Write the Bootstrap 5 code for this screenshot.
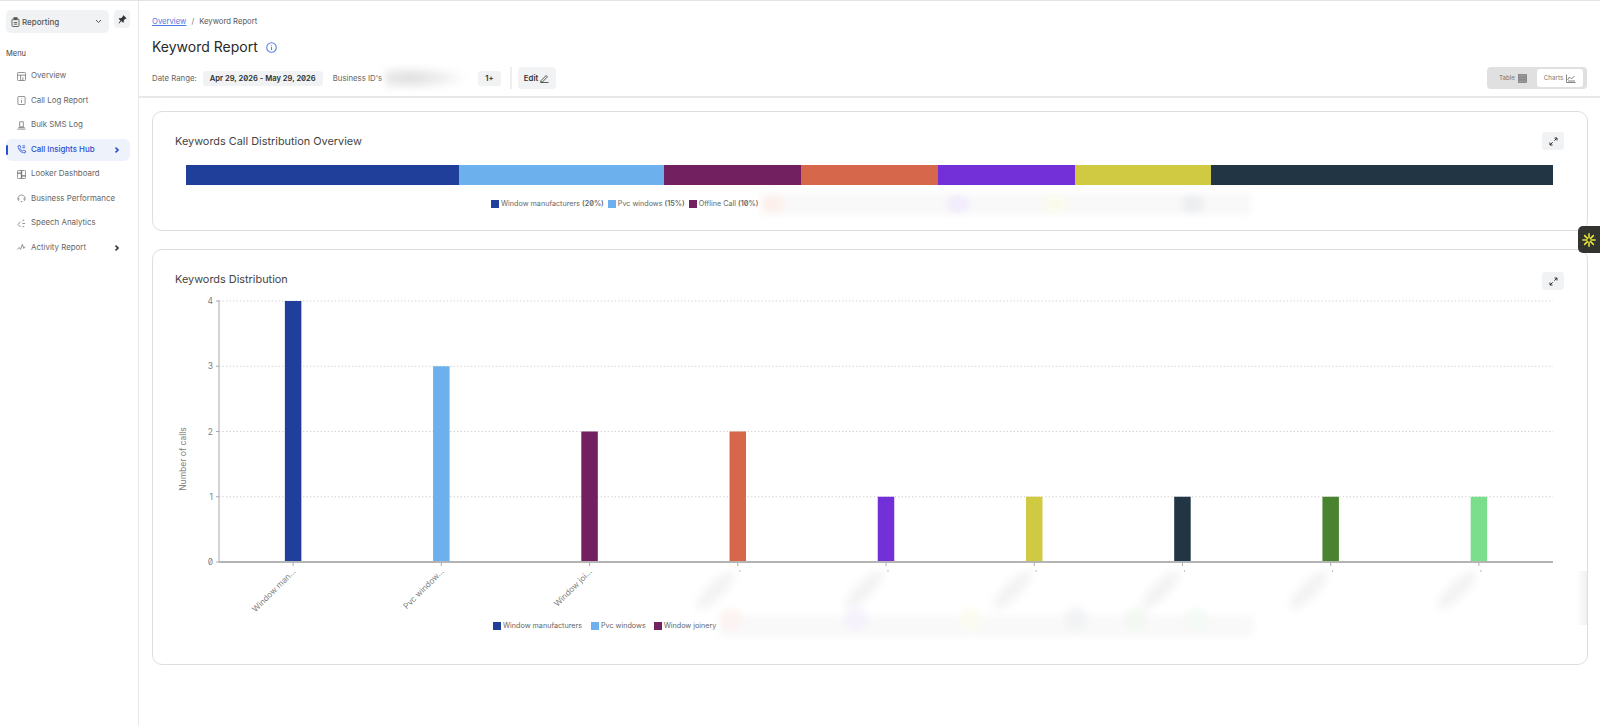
<!DOCTYPE html>
<html lang="en">
<head>
  <meta charset="UTF-8">
  <title>Keyword Report</title>
  <link href="https://cdn.jsdelivr.net/npm/bootstrap@5.3.0/dist/css/bootstrap.min.css" rel="stylesheet">
  <style>
    html, body { height: 725px; overflow: hidden; }
    body { font-family: Inter, "Liberation Sans", sans-serif; font-size: 8px; color: #555; background: #fff; font-feature-settings: "zero"; border-top: 1px solid #e4e4e4; }
    .sidebar { width: 139px; flex: none; height: 724px; border-right: 1px solid #e8e8e8; padding: 9px 8px 0 6px; }
    .module-select { width: 103px; height: 23px; background: #f1f2f3; border-radius: 5px; padding: 0 7px 0 5px; gap: 2px; color: #555; font-size: 8px; font-weight: 500; }
    .pin-btn { width: 16px; height: 18px; background: #f1f2f3; border-radius: 4px; margin-left: 5px; }
    .menu-title { margin: 16px 0 6px; font-size: 7.5px; font-weight: 400; color: #444; height: 10px; line-height: 10px; }
    .side-link { height: 22px; margin-bottom: 2.5px; padding: 0 10px 0 11px; gap: 5px; color: #666; font-size: 7.9px; border-radius: 6px; position: relative; text-decoration: none; white-space: nowrap; }
    .side-link svg { width: 9px; height: 9px; flex: none; stroke: #777; fill: none; stroke-width: .9; }
    .side-link.active { background: #eef2fb; color: #2a4fd0; font-weight: 500; }
    .side-link.active svg { stroke: #2a4fd0; }
    .side-link.active::before { content: ""; position: absolute; left: 0; top: 6px; width: 2px; height: 10px; background: #2a4fd0; border-radius: 1px; }
    .side-link .chev { margin-left: auto; width: 6px; height: 6px; stroke-width: 1.6; stroke: #333; }
    .side-link.active .chev { stroke: #2a4fd0; }
    .page-head { height: 97px; padding: 15px 13px 0 13px; border-bottom: 2px solid #e8e8e8; }
    .crumbs { font-size: 7.7px; height: 12px; line-height: 12px; color: #555; gap: 5px; }
    .crumbs a { color: #4c78e0; }
    .page-title { font-size: 14px; font-weight: 400; color: #2a2a2a; margin: 6px 0 0; line-height: 26px; height: 26px; gap: 8px; }
    .tool-row { margin-top: 7px; height: 22px; font-size: 7.8px; color: #666; }
    .tool-label { padding-top: 1px; }
    .pill { background: #f1f2f3; border-radius: 3px; height: 15px; line-height: 15px; padding: 0 7px; color: #2e2e2e; font-weight: 600; font-size: 7.6px; }
    .pill-date { margin-left: 6px; }
    .blur-id { width: 80px; height: 24px; margin: 0 13px 0 3px; background: radial-gradient(ellipse at 30% 50%, #dcdcdc, #f3f3f3 50%, #fff 75%); filter: blur(3px); }
    .v-sep { width: 2px; height: 22px; background: #eee; margin: 0 6px 0 9px; }
    .edit-btn { height: 22px; width: 38px; background: #f1f2f3; border-radius: 4px; color: #333; font-weight: 600; font-size: 7.8px; gap: 2px; }
    .view-toggle { height: 22px; width: 100px; background: #e0e0e0; border-radius: 4px; padding: 2px 4px 2px 2px; font-size: 6.2px; color: #777; }
    .view-toggle > div { gap: 3px; border-radius: 3px; }
    .view-toggle .on { background: #fff; }
    .report-card { border: 1px solid #dedede; border-radius: 10px; margin: 13px 0 0 13px; width: 1436px; background: #fff; padding: 0 23px 0 22px; }
    .report-card + .report-card { margin-top: 18px; }
    .card-head { font-size: 10.9px; font-weight: 400; color: #444; height: 18px; }
    .expand-btn { width: 22px; height: 18px; background: #f1f2f3; border-radius: 3px; }
    .stack-bar { height: 20px; margin: 15px 11px 0 11px; }
    .legend { font-size: 7.2px; color: #666; }
    .legend i { display: block; width: 8px; height: 8px; margin-right: 2px; flex: none; }
    .legend b { font-weight: 600; }
    .blur-band { height: 22px; background: #f9f9f9; filter: blur(3px); position: relative; }
    .blur-band span { position: absolute; top: 2px; width: 24px; height: 18px; border-radius: 50%; }
    .blur-band.raised span { top: -8px; height: 24px; opacity: .6; }
    .chart { margin-top: 7px; }
    .chart svg { display: block; font-family: Inter, "Liberation Sans", sans-serif; font-size: 7.6px; fill: #808080; }
    .side-widget { position: fixed; right: 0; top: 226px; width: 22px; height: 27px; background: #333330; border-radius: 5px 0 0 5px; }
    .edge-fade { position: fixed; left: 1577px; top: 571px; width: 10px; height: 54px; background: linear-gradient(90deg, #fff, #eef0f2); }
  </style>
</head>
<body>
  <div class="d-flex">
    <aside class="sidebar">
      <div class="d-flex align-items-start">
        <div class="module-select d-flex align-items-center">
          <svg width="9" height="10" viewBox="0 0 9 10" fill="none" stroke="#555" stroke-width=".9"><rect x="1" y="2" width="7" height="7.5" rx="1"/><rect x="3" y=".7" width="3" height="2" fill="#555"/><path d="M2.800 5.500h3.400M2.800 7.200h3.400"/></svg>
          <span>Reporting</span>
          <svg class="ms-auto" width="7" height="5" viewBox="0 0 7 5" fill="none" stroke="#555"><path d="M1 1l2.500 2.500L6 1"/></svg>
        </div>
        <div class="pin-btn d-flex align-items-center justify-content-center">
          <svg width="9" height="9" viewBox="0 0 16 16" fill="#333"><path d="M9.800.6l5.600 5.600-1.400.6-.8-.3-3 3 .2 3-1.400 1.200-3-3-4 4.300-1-.9L4.400 9.900 1.400 6.900l1.200-1.400 3 .2 3-3-.3-.8z"/></svg>
        </div>
      </div>
      <div class="menu-title">Menu</div>
      <nav class="nav flex-column">
        <a class="side-link d-flex align-items-center" href="#"><svg viewBox="0 0 10 10"><rect x=".5" y=".5" width="9" height="9" rx="1"/><path d="M.5 3.500h9M4 3.500v6M6.500 6v3.500"/></svg>Overview</a>
        <a class="side-link d-flex align-items-center" href="#"><svg viewBox="0 0 10 10"><rect x="1" y=".5" width="8" height="9" rx="1"/><path d="M5 2.500v.5M5 4.500v3"/></svg>Call Log Report</a>
        <a class="side-link d-flex align-items-center" href="#"><svg viewBox="0 0 10 10"><path d="M3 .8h4v5.700H3zM.5 9h9M1.500 7.300h7"/></svg>Bulk SMS Log</a>
        <a class="side-link active d-flex align-items-center" href="#"><svg viewBox="0 0 10 10"><path d="M1.200 1c0 4.500 3.300 7.800 7.800 7.800l.6-2-2.200-1-1 1C5 6.300 3.700 5 3.200 3.600l1-1-1-2.100zM6 1h3M6 3h3"/></svg>Call Insights Hub<svg class="chev" viewBox="0 0 6 6"><path d="M1.500.7L4 3 1.500 5.300"/></svg></a>
        <a class="side-link d-flex align-items-center" href="#"><svg viewBox="0 0 10 10"><rect x=".5" y=".5" width="9" height="9" rx="1"/><path d="M.5 3.500h4.500M5 .5v9M5 6.500h4.500" stroke-width="1.500"/></svg>Looker Dashboard</a>
        <a class="side-link d-flex align-items-center" href="#"><svg viewBox="0 0 10 10"><path d="M2.500 8C1 7 .8 5 1.300 3.500 2 2 3.500 1.200 5 1.200s3 .8 3.700 2.300c.5 1.500.3 3.500-1.200 4.500M1 5.500h2M7 5.500h2M4 8.500h2"/></svg>Business Performance</a>
        <a class="side-link d-flex align-items-center" href="#"><svg viewBox="0 0 10 10"><path d="M1 6l3-3M1 6l3 3M6 1.500h2M6 5h3M6 8.500h2"/></svg>Speech Analytics</a>
        <a class="side-link d-flex align-items-center" href="#"><svg viewBox="0 0 10 10"><path d="M.5 7l2-2 1.500 2 2-5.500L7.500 6l2-2"/></svg>Activity Report<svg class="chev" viewBox="0 0 6 6"><path d="M1.500.7L4 3 1.500 5.300"/></svg></a>
      </nav>
    </aside>

    <main class="flex-grow-1">
      <div class="page-head">
        <div class="crumbs d-flex"><a href="#">Overview</a><span class="text-secondary">/</span><span>Keyword Report</span></div>
        <h1 class="page-title d-flex align-items-center">Keyword Report
          <svg width="11" height="11" viewBox="0 0 12 12" fill="none" stroke="#5b82e6" stroke-width="1.200"><circle cx="6" cy="6" r="5.200"/><path d="M6 5.300v3.400M6 3.200v1"/></svg>
        </h1>
        <div class="tool-row d-flex align-items-center">
          <span class="tool-label">Date Range:</span>
          <span class="pill pill-date">Apr 29, 2026 - May 29, 2026</span>
          <span class="tool-label" style="margin-left:10px">Business ID's</span>
          <div class="blur-id"></div>
          <span class="pill">1+</span>
          <div class="v-sep"></div>
          <div class="edit-btn d-flex align-items-center justify-content-center"><span class="tool-label">Edit</span>
            <svg width="9" height="9" viewBox="0 0 10 10" fill="none" stroke="#333" stroke-width=".9"><path d="M1 7.500L6.800 1.700l1.500 1.500L2.500 9H1zM.5 9.500h9"/></svg>
          </div>
          <div class="view-toggle d-flex ms-auto">
            <div class="d-flex align-items-center justify-content-center flex-grow-1">Table
              <svg width="9" height="9" viewBox="0 0 9 9" fill="#999" stroke="#777" stroke-width=".7"><rect x=".5" y=".5" width="8" height="8"/><path d="M.5 3.200h8M.5 5.800h8"/></svg>
            </div>
            <div class="on d-flex align-items-center justify-content-center" style="width:46px">Charts
              <svg width="10" height="9" viewBox="0 0 10 9" fill="none" stroke="#666" stroke-width=".8"><path d="M.5.500v8h9M1.500 6l2-3 2 2 3-3M2 7h7"/></svg>
            </div>
          </div>
        </div>
      </div>

      <section class="report-card" style="height:120px">
        <div class="card-head d-flex align-items-center justify-content-between" style="margin-top:20px"><span>Keywords Call Distribution Overview</span>
          <div class="expand-btn d-flex align-items-center justify-content-center">
            <svg width="9" height="9" viewBox="0 0 9 9" fill="none" stroke="#333"><path d="M1 8l2.700-2.700M8 1L5.300 3.700M5.500 1H8v2.500M1 5.500V8h2.500"/></svg>
          </div>
        </div>
        <div class="stack-bar d-flex" id="stack"></div>
        <div class="legend d-flex align-items-center" style="margin:8px 0 0 316px">
          <i style="background:#203f9a"></i><span class="me-1">Window manufacturers <b>(20%)</b></span>
          <i style="background:#6cb1ee"></i><span class="me-1">Pvc windows <b>(15%)</b></span>
          <i style="background:#722060"></i><span>Offline Call <b>(10%)</b></span>
          <div class="blur-band" style="width:490px;margin-left:3px">
            <span style="left:0;background:#fdf0ec"></span>
            <span style="left:185px;background:#f2ecfc"></span>
            <span style="left:282px;background:#fbfbec"></span>
            <span style="left:420px;background:#eceef0"></span>
          </div>
        </div>
      </section>

      <section class="report-card" style="height:416px">
        <div class="card-head d-flex align-items-center justify-content-between" style="margin-top:22px"><span style="margin-bottom:3px">Keywords Distribution</span>
          <div class="expand-btn d-flex align-items-center justify-content-center">
            <svg width="9" height="9" viewBox="0 0 9 9" fill="none" stroke="#333"><path d="M1 8l2.700-2.700M8 1L5.300 3.700M5.500 1H8v2.500M1 5.500V8h2.500"/></svg>
          </div>
        </div>
        <div class="chart" id="chart"></div>
        <div class="legend d-flex align-items-center" style="margin:-2px 0 0 318px">
          <i style="background:#203f9a"></i><span style="margin-right:9px">Window manufacturers</span>
          <i style="background:#6cb1ee"></i><span style="margin-right:8px">Pvc windows</span>
          <i style="background:#722060"></i><span>Window joinery</span>
          <div class="blur-band raised" style="width:535px;margin-left:3px">
            <span style="left:0;background:#fdf0ec"></span>
            <span style="left:125px;background:#f2ecfc"></span>
            <span style="left:240px;background:#fbfbec"></span>
            <span style="left:345px;background:#eceef0"></span>
            <span style="left:405px;background:#eff6ec"></span>
            <span style="left:465px;background:#f0faf2"></span>
          </div>
        </div>
      </section>
    </main>
  </div>

  <div class="edge-fade"></div>
  <div class="side-widget d-flex align-items-center justify-content-center">
    <svg width="14" height="14" viewBox="0 0 16 16" stroke="#e6e63c" stroke-width="1.800" stroke-linecap="round"><path d="M8 1v4.500M8 10.500V15M1 8h4.500M10.500 8H15M3 3l3.200 3.200M9.800 9.800L13 13M13 3L9.800 6.200M6.200 9.800L3 13"/></svg>
  </div>

  <script src="https://cdn.jsdelivr.net/npm/bootstrap@5.3.0/dist/js/bootstrap.bundle.min.js"></script>
  <script>
    // stacked overview bar
    const stackData = [[20, '#203f9a'], [15, '#6cb1ee'], [10, '#722060'], [10, '#d6674a'], [10, '#7330d8'], [10, '#cfca41'], [25, '#213544']];
    document.getElementById('stack').innerHTML = stackData.map(s =>
      `<div style="width:${s[0]}%;background:${s[1]}"></div>`).join('');

    // keyword bar chart, plot area starts at x=44 inside the svg
    const bars = [
      [4, '#203f9a', 'Window man...'], [3, '#6cb1ee', 'Pvc window...'], [2, '#722060', 'Window joi...'],
      [2, '#d6674a'], [1, '#7330d8'], [1, '#cfca41'], [1, '#213544'], [1, '#4a832f'], [1, '#7bde8c']
    ];
    const plotLeft = 44, plotRight = 1378, plotTop = 4, plotBottom = 265, step = 65.25, colW = (plotRight - plotLeft) / 9;
    let svg = `<svg width="1390" height="320" viewBox="0 0 1390 320">
      <defs><filter id="soft" x="-50%" y="-50%" width="200%" height="200%"><feGaussianBlur stdDeviation="4"/></filter></defs>`;
    for (let i = 0; i <= 4; i++) {
      const y = plotBottom - i * step;
      if (i > 0) svg += `<line x1="${plotLeft}" x2="${plotRight}" y1="${y}" y2="${y}" stroke="#ccc" stroke-width=".8" stroke-dasharray="1.500 2"/>`;
      svg += `<line x1="${plotLeft - 3}" x2="${plotLeft}" y1="${y}" y2="${y}" stroke="#aaa"/>`;
      svg += `<text x="${plotLeft - 6}" y="${y + 3}" text-anchor="end" font-size="8.500">${i}</text>`;
    }
    svg += `<line x1="${plotLeft}" x2="${plotLeft}" y1="${plotTop - 1}" y2="${plotBottom}" stroke="#aaa"/>`;
    bars.forEach((b, i) => {
      const cx = plotLeft + colW * (i + .5);
      svg += `<rect x="${cx - 8.250}" y="${plotBottom - b[0] * step}" width="16.500" height="${b[0] * step}" fill="${b[1]}"/>`;
      svg += `<line x1="${cx}" x2="${cx}" y1="${plotBottom}" y2="${plotBottom + 4}" stroke="#aaa"/>`;
      if (b[2]) {
        svg += `<text transform="translate(${cx + 3} ${plotBottom + 10}) rotate(-45)" text-anchor="end" font-size="8.200">${b[2]}</text>`;
      } else {
        svg += `<line x1="${cx + 2}" x2="${cx + 2}" y1="${plotBottom + 8}" y2="${plotBottom + 10}" stroke="#bbb"/>`;
        svg += `<ellipse cx="${cx - 22}" cy="${plotBottom + 28}" rx="26" ry="8" fill="#f3f3f3" filter="url(#soft)" transform="rotate(-45 ${cx - 22} ${plotBottom + 28})"/>`;
      }
    });
    svg += `<line x1="${plotLeft}" x2="${plotRight}" y1="${plotBottom}" y2="${plotBottom}" stroke="#b4b4b4" stroke-width="2"/>`;
    svg += `<text transform="translate(11 162) rotate(-90)" text-anchor="middle" font-size="8.500">Number of calls</text></svg>`;
    document.getElementById('chart').innerHTML = svg;
  </script>
</body>
</html>
